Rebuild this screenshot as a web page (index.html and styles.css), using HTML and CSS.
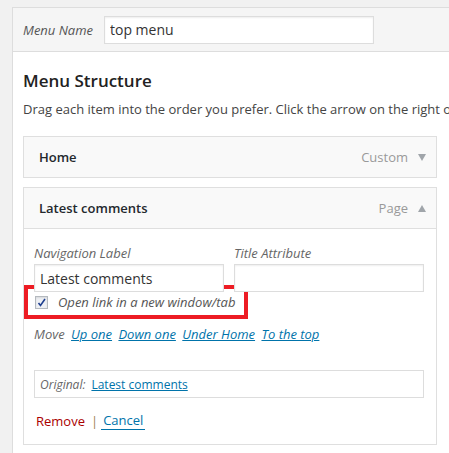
FILE: index.html
```html
<!DOCTYPE html>
<html lang="en">
<head>
    <meta charset="UTF-8">
    <title>Menus</title>
    <link rel="stylesheet" href="styles.css">
</head>
<body>
    <div class="menu-edit">
        <div class="menu-header">
            <label class="name-label">Menu Name</label>
            <input class="name-input" type="text" value="top menu">
        </div>

        <div class="menu-body">
            <h3>Menu Structure</h3>
            <p class="hint">Drag each item into the order you prefer. Click the arrow on the right of the item to reveal additional configuration options.</p>

            <div class="item">
                <div class="item-bar">
                    <span class="item-title">Home</span>
                    <span class="item-type">Custom</span>
                    <span class="arrow down"></span>
                </div>
            </div>

            <div class="item open">
                <div class="item-bar">
                    <span class="item-title">Latest comments</span>
                    <span class="item-type">Page</span>
                    <span class="arrow up"></span>
                </div>
                <div class="item-settings">
                    <div class="fields">
                        <label class="field">
                            Navigation Label
                            <input type="text" value="Latest comments">
                        </label>
                        <label class="field">
                            Title Attribute
                            <input type="text" value="">
                        </label>
                    </div>
                    <div class="target">
                        <span class="check">
                            <svg width="9" height="9" viewBox="0 0 9 9"><path d="M1.5 5 L3.5 7.5 L8 1" fill="none" stroke="#1e3f8f" stroke-width="1.6"/></svg>
                        </span>
                        <span class="target-text">Open link in a new window/tab</span>
                    </div>
                    <div class="move">
                        Move
                        <a href="#">Up one</a>
                        <a href="#">Down one</a>
                        <a href="#">Under Home</a>
                        <a href="#">To the top</a>
                    </div>
                    <div class="original">
                        <em>Original:</em>
                        <a href="#">Latest comments</a>
                    </div>
                    <div class="actions">
                        <a class="remove" href="#">Remove</a>
                        <span class="sep">|</span>
                        <a class="cancel" href="#">Cancel</a>
                    </div>
                </div>
            </div>
        </div>
    </div>
</body>
</html>
```

FILE: styles.css
```css
body {
    margin: 0;
    padding: 0;
    background-color: #f1f1f1;
    font-family: "Open Sans", sans-serif;
    font-size: 13px;
    color: #444;
    overflow: hidden;
}
.menu-edit {
    margin: 7px 0 0 12px;
    width: 470px;
    background-color: white;
    border: 1px solid #dddddd;
    height: 470px;
}
.menu-header {
    height: 43px;
    background-color: #f5f5f5;
    border-bottom: 1px solid #dddddd;
    display: flex;
    align-items: center;
    padding-left: 10px;
}
.name-label {
    font-style: italic;
    color: #555;
    width: 81px;
}
.name-input {
    width: 270px;
    height: 28px;
    box-sizing: border-box;
    border: 1px solid #dddddd;
    font-family: "Open Sans", sans-serif;
    font-size: 14px;
    color: #333;
    padding: 0 5px;
    margin-left: 0;
    box-shadow: inset 0 1px 2px rgba(0, 0, 0, 0.07);
}
.menu-body {
    padding: 0 10px;
}
h3 {
    margin: 17px 0 0;
    font-size: 17px;
    font-weight: 600;
    color: #222;
    line-height: 24px;
}
.hint {
    margin: 6px 0 0;
    white-space: nowrap;
    color: #444;
    line-height: 20px;
}
.item {
    width: 412px;
    border: 1px solid #dfdfdf;
    margin-top: 17px;
}
.item + .item {
    margin-top: 9px;
}
.item-bar {
    height: 40px;
    background-color: #f9f9f9;
    display: flex;
    align-items: center;
    padding: 0 10px 0 15px;
}
.item-title {
    font-weight: 600;
    color: #23282d;
    flex: 1;
}
.item-type {
    color: #999;
    margin-right: 10px;
}
.arrow {
    width: 0;
    height: 0;
    border-left: 4px solid transparent;
    border-right: 4px solid transparent;
}
.arrow.down {
    border-top: 7px solid #a0a5aa;
}
.arrow.up {
    border-bottom: 7px solid #a0a5aa;
}
.item.open .item-bar {
    border-bottom: 1px solid #dfdfdf;
}
.item-settings {
    background-color: white;
    padding: 15px 12px 8px 10px;
    height: 215px;
    box-sizing: border-box;
}
.fields {
    display: flex;
    gap: 10px;
}
.field {
    display: flex;
    flex-direction: column;
    font-style: italic;
    color: #666;
    width: 190px;
    line-height: 19px;
}
.field input {
    width: 190px;
    height: 28px;
    box-sizing: border-box;
    border: 1px solid #dddddd;
    font-family: "Open Sans", sans-serif;
    font-size: 14px;
    color: #333;
    padding: 0 5px;
    margin: 1px 0 0;
    box-shadow: inset 0 1px 2px rgba(0, 0, 0, 0.07);
}
.target {
    display: flex;
    align-items: center;
    width: 209px;
    height: 26px;
    margin: -7px 0 0 -10px;
    padding-left: 7px;
    border: 4px solid #ed1c24;
}
.check {
    width: 11px;
    height: 11px;
    border: 1px solid #b4b9be;
    background: #eef0f4;
    display: flex;
    align-items: center;
    justify-content: center;
    box-shadow: inset 0 1px 2px rgba(0, 0, 0, 0.1);
}
.target-text {
    font-style: italic;
    color: #555;
    margin-left: 10px;
}
.move {
    margin-top: 5px;
    font-style: italic;
    color: #666;
    line-height: 20px;
}
.move a {
    color: #0073aa;
    margin-left: 3px;
}
.original {
    margin-top: 26px;
    height: 26px;
    border: 1px solid #dddddd;
    display: flex;
    align-items: center;
    padding-left: 5px;
    color: #666;
    font-size: 12px;
}
.original a {
    color: #0073aa;
    margin-left: 6px;
}
.actions {
    margin-top: 13px;
    display: flex;
    align-items: center;
}
.remove {
    color: #a00;
    text-decoration: none;
    margin-left: 2px;
}
.sep {
    color: #a08050;
    margin: 0 3px 0 6px;
}
.cancel {
    color: #0073aa;
    text-decoration: none;
    border-bottom: 1px solid #0073aa;
    padding: 0 2px;
}
```
